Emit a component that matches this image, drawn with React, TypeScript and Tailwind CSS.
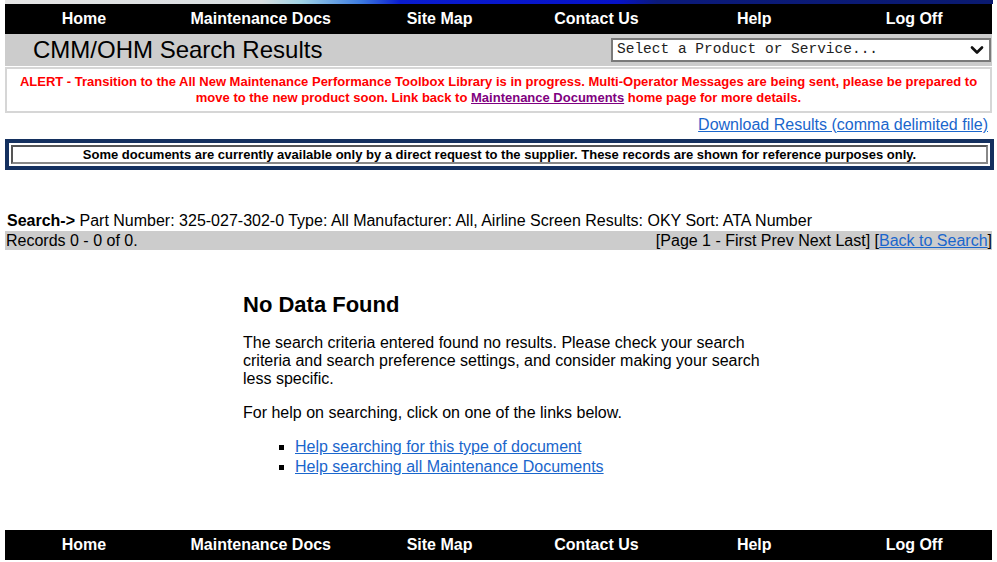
import { ChevronDown } from "lucide-react";

const navItems = [
  { label: "Home", w: "w-[158px]" },
  { label: "Maintenance Docs", w: "w-[196px]" },
  { label: "Site Map", w: "w-[162px]" },
  { label: "Contact Us", w: "w-[152px]" },
  { label: "Help", w: "w-[164px]" },
  { label: "Log Off", w: "w-[156px]" },
];

const NavBar = () => (
  <nav className="flex h-[30px] items-center bg-black text-white">
    {navItems.map((item) => (
      <a key={item.label} className={`${item.w} text-center text-[16px] font-bold leading-[30px]`}>
        {item.label}
      </a>
    ))}
  </nav>
);

const App = () => {
  return (
    <div className="w-[997px] bg-white px-[5px] text-black font-['Liberation_Sans',Arial,sans-serif]">
      {/* banner strip */}
      <div className="h-[4px] w-[988px] bg-[linear-gradient(90deg,#e4e4e4_0%,#d8dde0_26%,#9fd3e6_30%,#3d7be0_36%,#0a1ccf_40%,#0612c8_62%,#0b1a7a_66%,#0a1a70_100%)]" />
      <NavBar />

      {/* title bar */}
      <div className="flex h-[32px] items-center justify-between bg-[#cccccc]">
        <h1 className="pl-[28px] text-[24px] leading-[32px]">CMM/OHM Search Results</h1>
        <div className="mr-[1px] flex h-[24px] w-[380px] items-center justify-between border-2 border-[#7a7a7a] bg-white pl-[4px] pr-[2px]">
          <span className="font-['Liberation_Mono',monospace] text-[14.5px] text-[#222]">Select a Product or Service...</span>
          <ChevronDown size={20} strokeWidth={3.2} className="text-[#111]" />
        </div>
      </div>

      {/* alert */}
      <div className="mt-[1px] border-2 border-[#d6d6d6] px-[10px] pt-[5px] pb-[5px] text-center text-[13px] font-bold leading-[16px] text-[#ff0000]">
        ALERT - Transition to the All New Maintenance Performance Toolbox Library is in progress. Multi-Operator Messages are being sent, please be prepared to move to the new product soon. Link back to{" "}
        <a className="text-[#800080] underline">Maintenance Documents</a> home page for more details.
      </div>

      <div className="mt-[2px] pr-[4px] text-right text-[16px] leading-[20px]">
        <a className="text-[#1a66cc] underline">Download Results (comma delimited file)</a>
      </div>

      {/* notice */}
      <div className="mt-[4px] w-[989px] border-[4px] border-[#14305f] bg-white p-[2px]">
        <div className="border-2 border-t-[#555] border-l-[#555] border-r-[#888] border-b-[#888] text-center text-[13px] font-bold leading-[15px]">
          Some documents are currently available only by a direct request to the supplier. These records are shown for reference purposes only.
        </div>
      </div>

      {/* search criteria */}
      <div className="mt-[42px] pl-[2px] text-[16px] leading-[18px]">
        <b>Search-&gt;</b> Part Number: 325-027-302-0 Type: All Manufacturer: All, Airline Screen Results: OKY Sort: ATA Number
      </div>
      <div className="mt-[1px] flex h-[19px] items-center justify-between bg-[#cccccc] text-[16px] leading-[19px]">
        <span className="pl-[1px]">Records 0 - 0 of 0.</span>
        <span>
          [Page 1 - First Prev Next Last] [<a className="text-[#1a66cc] underline">Back to Search</a>]
        </span>
      </div>

      {/* no data */}
      <div className="ml-[238px] w-[520px] pt-[42px] pb-[53px] text-[16px] leading-[18px]">
        <h2 className="text-[22px] font-bold leading-[26px]">No Data Found</h2>
        <p className="mt-[16px]">
          The search criteria entered found no results. Please check your search criteria and search preference settings, and consider making your search less specific.
        </p>
        <p className="mt-[16px]">For help on searching, click on one of the links below.</p>
        <ul className="mt-[15px] list-[square] pl-[52px] leading-[20px]">
          <li><a className="text-[#1a66cc] underline">Help searching for this type of document</a></li>
          <li><a className="text-[#1a66cc] underline">Help searching all Maintenance Documents</a></li>
        </ul>
      </div>

      <NavBar />
    </div>
  );
};

export default App;
